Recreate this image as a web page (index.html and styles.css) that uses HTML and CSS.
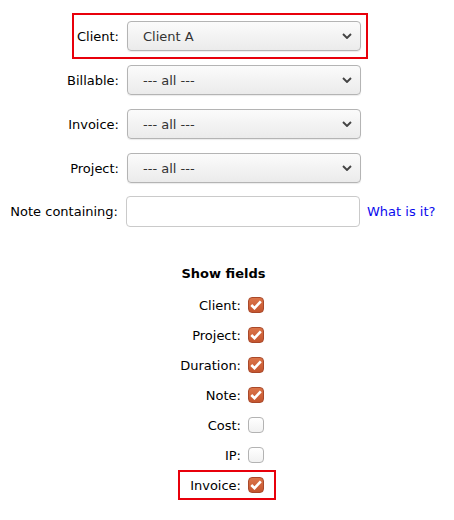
FILE: index.html
```html
<!DOCTYPE html>
<html>
<head>
<meta charset="utf-8">
<link rel="stylesheet" href="styles.css">
</head>
<body>
<form class="page">
  <div class="filters">
    <div class="hl-row">
      <span class="label">Client:</span>
      <div class="select"><span>Client A</span><svg class="chev" width="10" height="6" viewBox="0 0 10 6"><path d="M1 1 L5 5 L9 1" fill="none" stroke="#444" stroke-width="1.9"/></svg></div>
    </div>
    <div class="row">
      <span class="label">Billable:</span>
      <div class="select"><span>--- all ---</span><svg class="chev" width="10" height="6" viewBox="0 0 10 6"><path d="M1 1 L5 5 L9 1" fill="none" stroke="#444" stroke-width="1.9"/></svg></div>
    </div>
    <div class="row">
      <span class="label">Invoice:</span>
      <div class="select"><span>--- all ---</span><svg class="chev" width="10" height="6" viewBox="0 0 10 6"><path d="M1 1 L5 5 L9 1" fill="none" stroke="#444" stroke-width="1.9"/></svg></div>
    </div>
    <div class="row">
      <span class="label">Project:</span>
      <div class="select"><span>--- all ---</span><svg class="chev" width="10" height="6" viewBox="0 0 10 6"><path d="M1 1 L5 5 L9 1" fill="none" stroke="#444" stroke-width="1.9"/></svg></div>
    </div>
    <div class="row row-text">
      <span class="label label-text">Note containing:</span>
      <div class="input"></div>
      <a class="link" href="#">What is it?</a>
    </div>
  </div>

  <div class="fields">
    <div class="fields-title">Show fields</div>
    <div class="frow"><span class="flabel">Client:</span><span class="cb on"><svg width="12" height="10" viewBox="0 0 12 10"><path d="M1.3 5 L4.5 8.2 L10.8 1.4" fill="none" stroke="#fff" stroke-width="2.6"/></svg></span></div>
    <div class="frow"><span class="flabel">Project:</span><span class="cb on"><svg width="12" height="10" viewBox="0 0 12 10"><path d="M1.3 5 L4.5 8.2 L10.8 1.4" fill="none" stroke="#fff" stroke-width="2.6"/></svg></span></div>
    <div class="frow"><span class="flabel">Duration:</span><span class="cb on"><svg width="12" height="10" viewBox="0 0 12 10"><path d="M1.3 5 L4.5 8.2 L10.8 1.4" fill="none" stroke="#fff" stroke-width="2.6"/></svg></span></div>
    <div class="frow"><span class="flabel">Note:</span><span class="cb on"><svg width="12" height="10" viewBox="0 0 12 10"><path d="M1.3 5 L4.5 8.2 L10.8 1.4" fill="none" stroke="#fff" stroke-width="2.6"/></svg></span></div>
    <div class="frow"><span class="flabel">Cost:</span><span class="cb"></span></div>
    <div class="frow"><span class="flabel">IP:</span><span class="cb"></span></div>
    <div class="frow frow-hl"><span class="flabel">Invoice:</span><span class="cb on"><svg width="12" height="10" viewBox="0 0 12 10"><path d="M1.3 5 L4.5 8.2 L10.8 1.4" fill="none" stroke="#fff" stroke-width="2.6"/></svg></span></div>
  </div>
</form>
</body>
</html>
```
FILE: styles.css
```css
body {
  margin: 0;
  font-family: "DejaVu Sans", sans-serif;
  font-size: 13px;
  color: #000;
  background: #fff;
}
.filters {
  padding-top: 13px;
}
.hl-row {
  margin-left: 72px;
  width: 296px;
  box-sizing: border-box;
  border: 2px solid #e8000b;
  padding: 6px 5px 6px 0;
  display: flex;
  align-items: center;
  justify-content: flex-end;
  gap: 8px;
}
.row {
  display: flex;
  align-items: center;
  gap: 8px;
  margin-top: 14px;
}
.hl-row + .row {
  margin-top: 6px;
}
.row .label {
  width: 119px;
  text-align: right;
}
.row .label-text {
  width: 118px;
}
.row-text {
  margin-top: 13px;
}
.select {
  width: 234px;
  height: 30px;
  box-sizing: border-box;
  border: 1px solid #b4b4b4;
  border-radius: 4px;
  background: linear-gradient(#fbfbfb, #ebebeb);
  box-shadow: 0 1px 1px rgba(0,0,0,0.08);
  padding: 0 8px 0 15px;
  display: flex;
  align-items: center;
  justify-content: space-between;
  color: #333;
}
.chev {
  display: block;
}
.input {
  width: 234px;
  height: 31px;
  box-sizing: border-box;
  border: 1px solid #cacaca;
  border-radius: 4px;
  background: #fff;
}
.link {
  color: #0a0aee;
  text-decoration: none;
  margin-left: -1px;
}
.fields {
  margin-top: 39px;
  margin-left: 180px;
}
.fields-title {
  width: 87px;
  text-align: center;
  font-weight: bold;
  line-height: 16px;
  margin-bottom: 10px;
}
.frow {
  width: 84px;
  height: 26px;
  padding-right: 10px;
  display: flex;
  align-items: center;
  gap: 7px;
  margin-bottom: 4px;
}
.frow-hl {
  outline: 2px solid #e8000b;
}
.flabel {
  width: 61px;
  text-align: right;
}
.cb {
  width: 16px;
  height: 16px;
  box-sizing: border-box;
  border: 1px solid #b3b3b3;
  border-radius: 4px;
  background: linear-gradient(#ffffff, #f1f1f1);
  display: flex;
  align-items: center;
  justify-content: center;
}
.cb.on {
  border-color: #a9492a;
  background: linear-gradient(#db7449, #c4552f);
}
.cb svg {
  display: block;
}
```
